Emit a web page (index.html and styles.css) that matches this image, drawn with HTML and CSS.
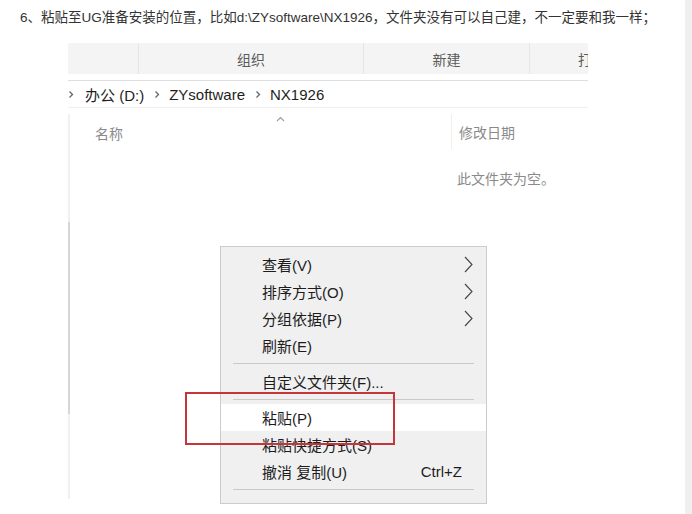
FILE: index.html
```html
<!DOCTYPE html>
<html lang="zh-CN">
<head>
<meta charset="utf-8">
<title>粘贴至UG安装位置</title>
<link rel="stylesheet" href="styles.css">
</head>
<body>
<div class="page">
  <div class="main">
    <p class="caption">6、粘贴至UG准备安装的位置，比如d:\ZYsoftware\NX1926，文件夹没有可以自己建，不一定要和我一样；</p>
    <div class="explorer">
      <div class="toolbar">
        <div class="tb-cell tb-blank"></div>
        <div class="tb-cell tb-org">组织</div>
        <div class="tb-cell tb-new">新建</div>
        <div class="tb-cell tb-open">打开</div>
      </div>
      <div class="crumbs">
        <svg class="chev" width="6" height="9" viewBox="0 0 6 9"><path d="M1.5 1.5 L4.5 4.5 L1.5 7.5" fill="none" stroke="#666" stroke-width="1.3"/></svg>
        <span class="crumb">办公 (D:)</span>
        <svg class="chev" width="6" height="9" viewBox="0 0 6 9"><path d="M1.5 1.5 L4.5 4.5 L1.5 7.5" fill="none" stroke="#666" stroke-width="1.3"/></svg>
        <span class="crumb">ZYsoftware</span>
        <svg class="chev" width="6" height="9" viewBox="0 0 6 9"><path d="M1.5 1.5 L4.5 4.5 L1.5 7.5" fill="none" stroke="#666" stroke-width="1.3"/></svg>
        <span class="crumb">NX1926</span>
      </div>
      <div class="files">
        <div class="rail"><div class="thumb"></div></div>
        <div class="files-main">
          <div class="col-head">
            <div class="col-name">
              <svg class="caret" width="9" height="6" viewBox="0 0 9 6"><path d="M1 5 L4.5 1.5 L8 5" fill="none" stroke="#9a9a9a" stroke-width="1.1"/></svg>
              <span>名称</span>
            </div>
            <div class="col-date">修改日期</div>
          </div>
          <div class="empty">此文件夹为空。</div>
        </div>

        <div class="menu">
          <div class="item"><span>查看(V)</span><svg class="sub" width="9" height="17" viewBox="0 0 9 17"><path d="M1 1 L8 8.5 L1 16" fill="none" stroke="#444" stroke-width="1.1"/></svg></div>
          <div class="item"><span>排序方式(O)</span><svg class="sub" width="9" height="17" viewBox="0 0 9 17"><path d="M1 1 L8 8.5 L1 16" fill="none" stroke="#444" stroke-width="1.1"/></svg></div>
          <div class="item"><span>分组依据(P)</span><svg class="sub" width="9" height="17" viewBox="0 0 9 17"><path d="M1 1 L8 8.5 L1 16" fill="none" stroke="#444" stroke-width="1.1"/></svg></div>
          <div class="item"><span>刷新(E)</span></div>
          <div class="sep"></div>
          <div class="item"><span>自定义文件夹(F)...</span></div>
          <div class="sep"></div>
          <div class="item item-hot"><span>粘贴(P)</span></div>
          <div class="item"><span>粘贴快捷方式(S)</span></div>
          <div class="item"><span>撤消 复制(U)</span><span class="key">Ctrl+Z</span></div>
          <div class="sep"></div>
        </div>
        <div class="mark"></div>
      </div>
    </div>
  </div>
  <div class="strip"></div>
</div>
</body>
</html>
```

FILE: styles.css
```css
html, body {
  margin: 0;
  padding: 0;
  background: #ffffff;
}

body {
  font-family: "Liberation Sans", "Noto Sans CJK SC", sans-serif;
  color: #222;
}

.page {
  display: flex;
  width: 692px;
  height: 514px;
  overflow: hidden;
}

.main {
  flex: 1;
  min-width: 0;
}

.strip {
  width: 7px;
  background: #efeff1;
}

.caption {
  margin: 0;
  padding: 9px 0 0 20px;
  font-size: 13.5px;
  line-height: 18px;
  color: #333;
  white-space: nowrap;
}

.explorer {
  margin: 16px 0 0 68px;
  width: 520px;
}

.toolbar {
  display: flex;
  height: 31px;
  background: #f4f4f4;
  overflow: hidden;
}

.tb-cell {
  flex: none;
  display: flex;
  align-items: center;
  justify-content: center;
  font-size: 14px;
  color: #5a5a5a;
  border-right: 1px solid #e6e6e6;
  white-space: nowrap;
}

.tb-blank { width: 70px; }
.tb-org { width: 224px; }
.tb-new { width: 165px; }
.tb-open {
  width: 60px;
  justify-content: flex-start;
  padding-left: 48px;
  border-right: none;
}

.crumbs {
  margin-top: 6px;
  height: 26px;
  border-top: 1px solid #dedede;
  border-bottom: 1px solid #efefef;
  display: flex;
  align-items: center;
  font-size: 15px;
  color: #1e1e1e;
}

.chev {
  flex: none;
  margin: 0 9px 0 0;
}

.crumb {
  margin-right: 10px;
}

.crumbs .crumb:first-of-type {
  margin-left: 2px;
}

.files {
  position: relative;
  display: flex;
  height: 391px;
}

.rail {
  width: 2px;
  margin-top: 6px;
  background: #f0f0f0;
}

.thumb {
  margin-top: 108px;
  height: 192px;
  background: #d6d6d6;
}

.files-main {
  flex: 1;
  padding-top: 6px;
}

.col-head {
  display: flex;
  height: 35px;
}

.col-name {
  width: 382px;
  border-right: 1px solid #eeeeee;
  position: relative;
  display: flex;
  flex-direction: column;
  padding-left: 25px;
  box-sizing: border-box;
}

.caret {
  align-self: center;
  margin: 2px 0 0 14px;
}

.col-name span {
  font-size: 14px;
  line-height: 18px;
  margin-top: 3px;
  color: #8a8a8a;
}

.col-date {
  padding: 10px 0 0 7px;
  font-size: 14px;
  line-height: 18px;
  color: #8a8a8a;
}

.empty {
  padding: 21px 0 0 387px;
  font-size: 14px;
  line-height: 18px;
  color: #8a8a8a;
}

.menu {
  position: absolute;
  left: 152px;
  top: 138px;
  width: 265px;
  height: 252px;
  background: #f0f0f0;
  border: 1px solid #cccccc;
  padding-top: 4px;
  box-sizing: content-box;
}

.item {
  height: 27px;
  display: flex;
  align-items: center;
  justify-content: space-between;
  padding: 0 13px 0 41px;
  font-size: 15px;
  color: #1c1c1c;
}

.item-hot {
  background: #ffffff;
}

.key {
  margin-right: 11px;
}

.sub {
  flex: none;
}

.sep {
  height: 1px;
  margin: 4px 12px;
  background: #c9c9c9;
}

.mark {
  position: absolute;
  left: 117px;
  top: 284px;
  width: 206px;
  height: 49px;
  border: 2px solid #c4363c;
}
```
